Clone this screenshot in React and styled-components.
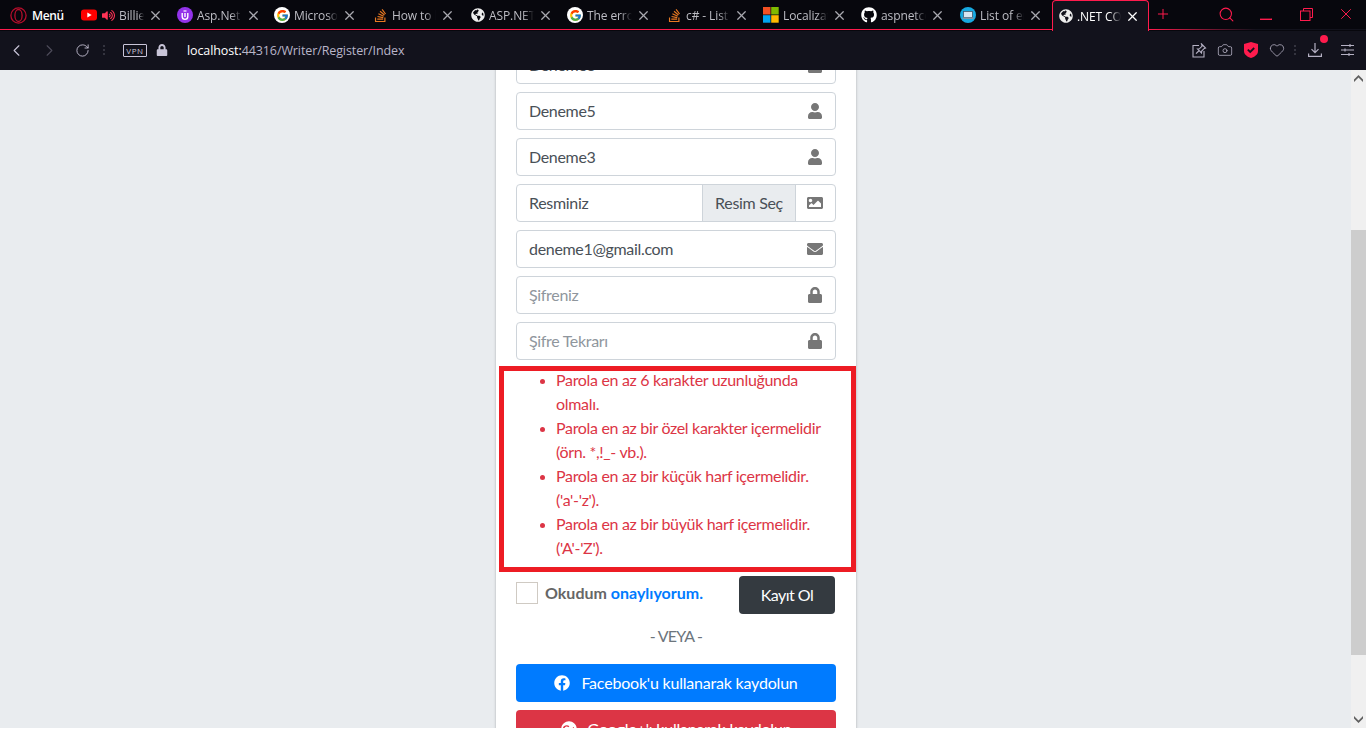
import React from 'react';
import styled, { createGlobalStyle } from 'styled-components';
import { FaUser, FaImage, FaEnvelope, FaLock, FaFacebook, FaGooglePlus, FaGlobeAmericas, FaGithub, FaStackOverflow, FaVolumeUp } from 'react-icons/fa';
import { FcGoogle } from 'react-icons/fc';
import { ChevronLeft, ChevronRight, RotateCw, Camera, Heart, X, Plus, Search } from 'lucide-react';

const GlobalStyle = createGlobalStyle`
  html, body {
    margin: 0;
    height: 733px;
    overflow: hidden;
    background: #fff;
  }
  * { box-sizing: border-box; }
`;

const Window = styled.div`
  width: 1366px;
  height: 733px;
  display: flex;
  flex-direction: column;
`;

/* browser chrome */
const TabStrip = styled.div`
  height: 31px;
  flex: none;
  display: flex;
  align-items: stretch;
  background: #07070d;
  border-bottom: 1px solid transparent;
  background-image: linear-gradient(90deg, #ff1b4d 0, #ff1b4d 1150px, #12121c 1256px);
  background-size: 100% 1px;
  background-position: bottom;
  background-repeat: no-repeat;
  font-family: 'Open Sans', 'Noto Sans', sans-serif;
  font-size: 12px;
  color: #bdbdc4;
`;

const MenuButton = styled.div`
  width: 73px;
  flex: none;
  display: flex;
  align-items: center;
  gap: 5px;
  padding-left: 10px;
  color: #fff;
  font-weight: 600;
  letter-spacing: -0.4px;
`;

const Tab = styled.div`
  width: ${({ $active }) => ($active ? '97px' : '98px')};
  margin-left: ${({ $active }) => ($active ? '-1px' : '0')};
  flex: none;
  height: ${({ $active }) => ($active ? '31px' : '30px')};
  display: flex;
  align-items: center;
  gap: 4px;
  padding: 0 ${({ $right }) => $right || 10}px 0 ${({ $pad }) => $pad || 6}px;
  ${({ $active }) =>
    $active &&
    `
    background: #12121c;
    border: 1px solid #ff1b4d;
    border-bottom: 0;
    border-radius: 4px 4px 0 0;
    color: #fff;
  `}
`;

const TabIcons = styled.span`
  display: flex;
  align-items: center;
  gap: 5px;
  flex: none;
`;

const TabTitle = styled.span`
  flex: 1;
  min-width: 0;
  overflow: hidden;
  white-space: nowrap;
  letter-spacing: -0.1px;
  mask-image: linear-gradient(90deg, #000 75%, transparent 100%);
`;

const TabClose = styled(X)`
  width: 15px;
  height: 15px;
  flex: none;
  color: ${({ $active }) => ($active ? '#fff' : '#a9a9b0')};
`;

const WindowButtons = styled.div`
  flex: 1;
  display: flex;
  align-items: center;
  color: #ff1b4d;
  padding: 0 0 2px 1px;
  height: 30px;
`;

const WindowButton = styled.span`
  width: ${({ $w }) => $w || 40}px;
  margin-left: ${({ $ml }) => $ml || 0}px;
  display: flex;
  justify-content: center;
  align-items: center;
`;

const Toolbar = styled.div`
  height: 39px;
  flex: none;
  display: flex;
  align-items: center;
  background: #12121c;
  color: #c9c5d8;
  font-family: 'Open Sans', 'Noto Sans', sans-serif;
  padding: 0 0 1px 7px;
`;

const NavButton = styled.span`
  width: 33px;
  display: flex;
  justify-content: center;
  margin-left: ${({ $ml }) => $ml || 0}px;
  margin-right: ${({ $mr }) => $mr || 0}px;
  color: ${({ $dim }) => ($dim ? '#4e4c5a' : '#c9c5d8')};
`;

const Vpn = styled.span`
  width: 24px;
  height: 13px;
  border: 1px solid #c9c5d8;
  border-radius: 1px;
  font-size: 8px;
  line-height: 11px;
  text-align: center;
  letter-spacing: 0.6px;
  margin-left: 18px;
`;

const Address = styled.div`
  margin-left: 15px;
  font-size: 12.5px;
  letter-spacing: -0.1px;
  color: #b9b5c9;
  b {
    color: #fff;
    font-weight: 400;
  }
`;

const ToolbarRight = styled.div`
  margin-left: auto;
  display: flex;
  align-items: center;
  color: #b5b1c4;
  padding-right: 6px;
`;

const ToolIcon = styled.span`
  position: relative;
  width: 26px;
  display: flex;
  justify-content: center;
  margin-left: ${({ $ml }) => $ml || 0}px;
`;

const Badge = styled.i`
  position: absolute;
  top: -8px;
  right: 0px;
  width: 8px;
  height: 8px;
  border-radius: 50%;
  background: #ff1b4d;
`;

/* page */
const Viewport = styled.div`
  height: 658px;
  flex: none;
  display: flex;
`;

const PageArea = styled.div`
  flex: 1;
  min-width: 0;
  overflow: hidden;
  background: #e9ecef;
  padding-left: 1px;
  font-family: 'Lato', 'Noto Sans', sans-serif;
  font-size: 16px;
  letter-spacing: -0.32px;
  color: #495057;
`;

const Card = styled.div`
  width: 360px;
  margin: -24px auto 0;
  padding: 0 20px 20px;
  background: #fff;
  box-shadow: 0 0 1px rgba(0, 0, 0, 0.125), 0 1px 3px rgba(0, 0, 0, 0.2);
`;

const Field = styled.div`
  height: 38px;
  margin-bottom: 8px;
  display: flex;
  align-items: stretch;
  border: 1px solid #ced4da;
  border-radius: 4px;
  overflow: hidden;
`;

const FieldText = styled.div`
  flex: 1;
  padding-left: 12px;
  line-height: 36px;
  color: ${({ $placeholder }) => ($placeholder ? '#8f969d' : '#495057')};
`;

const FileLabel = styled.div`
  width: 94px;
  margin-right: -1px;
  flex: none;
  background: #e9ecef;
  border-left: 1px solid #ced4da;
  border-right: 1px solid #ced4da;
  line-height: 36px;
  text-align: center;
`;

const FieldIcon = styled.div`
  width: 40px;
  flex: none;
  display: flex;
  align-items: center;
  justify-content: center;
  color: #777;
  font-size: 16px;
`;

const Errors = styled.div`
  position: relative;
  margin-bottom: 16px;
`;

const ErrorList = styled.ul`
  margin: 0;
  padding: 0 0 0 40px;
  color: #dc3545;
  line-height: 24px;
  li::marker { font-size: 14px; }
`;

const ErrorTail = styled.span`
  white-space: nowrap;
`;

const Highlight = styled.div`
  position: absolute;
  top: -2px;
  left: -17px;
  right: -20px;
  bottom: -12px;
  border: 5px solid #ed1c24;
  pointer-events: none;
`;

const AgreeRow = styled.div`
  display: flex;
  justify-content: space-between;
  align-items: flex-start;
  padding-right: 1px;
`;

const Agree = styled.label`
  display: flex;
  align-items: center;
  gap: 7px;
  margin-top: 6px;
  font-weight: 700;
  letter-spacing: 0;
  color: #666;
`;

const AgreeText = styled.span`
  margin-top: -2px;
`;

const CheckBox = styled.span`
  width: 22px;
  height: 22px;
  border: 1px solid #cfcac3;
`;

const Link = styled.span`
  color: #007bff;
`;

const Submit = styled.div`
  width: 96px;
  height: 38px;
  background: #343a40;
  border-radius: 4px;
  color: #fff;
  line-height: 38px;
  letter-spacing: -0.55px;
  text-align: center;
`;

const Or = styled.p`
  margin: 10px 0 16px;
  height: 24px;
  line-height: 24px;
  letter-spacing: -0.8px;
  text-align: center;
  color: #6c757d;
`;

const Social = styled.div`
  height: 38px;
  margin-bottom: 8px;
  padding-bottom: 1px;
  display: flex;
  align-items: center;
  justify-content: center;
  gap: 11px;
  border-radius: 4px;
  letter-spacing: -0.2px;
  color: #fff;
  background: ${({ $color }) => $color};
`;

const Bottom = styled.div`
  height: 5px;
  flex: none;
  background: #fff;
`;

const Scrollbar = styled.div`
  width: 15px;
  flex: none;
  display: flex;
  flex-direction: column;
  background: #f0f0f0;
  color: #606060;
`;

const ScrollArrow = styled.span`
  height: 17px;
  flex: none;
  display: flex;
  align-items: center;
  justify-content: center;
  margin-top: ${({ $down }) => ($down ? 'auto' : 0)};
`;

const ScrollThumb = styled.div`
  height: 425px;
  margin-top: 143px;
  background: #cdcdcd;
`;

/* icons */
const OperaLogo = () => (
  <svg width="17" height="17" viewBox="0 0 17 17" fill="none" stroke="#b50e2c" strokeWidth="1.3">
    <circle cx="8.5" cy="8.5" r="7.6" />
    <ellipse cx="8.5" cy="8.5" rx="3.6" ry="6" />
  </svg>
);

const YouTube = () => (
  <svg width="16" height="12" viewBox="0 0 16 12">
    <rect width="16" height="11" y="0.5" rx="3" fill="#f00" />
    <path d="M6.3 3.5v5l4.4-2.5z" fill="#fff" />
  </svg>
);

const Ulti = () => (
  <svg width="16" height="16" viewBox="0 0 16 16">
    <circle cx="8" cy="8" r="8" fill="#9333ea" />
    <path d="M5.2 6v3.6a2.8 2.8 0 0 0 5.6 0V6M8 6v4" fill="none" stroke="#fff" strokeWidth="1.4" />
    <path d="M6.5 4h3" stroke="#fff" strokeWidth="1.2" />
  </svg>
);

const GoogleBadge = styled.span`
  width: 16px;
  height: 16px;
  border-radius: 50%;
  background: #fff;
  display: flex;
  align-items: center;
  justify-content: center;
`;

const Google = () => (
  <GoogleBadge>
    <FcGoogle size={13} />
  </GoogleBadge>
);

const Microsoft = () => (
  <svg width="16" height="16" viewBox="0 0 16 16">
    <rect width="7.5" height="7.5" fill="#f25022" />
    <rect x="8.2" width="7.5" height="7.5" fill="#7fba00" />
    <rect y="8.2" width="7.5" height="7.5" fill="#00a4ef" />
    <rect x="8.2" y="8.2" width="7.5" height="7.5" fill="#ffb900" />
  </svg>
);

const Laptop = () => (
  <svg width="16" height="16" viewBox="0 0 16 16">
    <circle cx="8" cy="8" r="8" fill="#17a9e0" />
    <rect x="3.5" y="4.5" width="9" height="6" fill="#d7e6f2" stroke="#44576b" strokeWidth="0.8" />
    <rect x="2.5" y="10.5" width="11" height="1.5" fill="#8296a8" />
  </svg>
);

const PinBox = () => (
  <svg width="15" height="15" viewBox="0 0 15 15" fill="none" stroke="currentColor" strokeWidth="1.1">
    <path d="M7 2.5H1v11.5h11V8" />
    <path d="M9.5 1l4 4-1.2.4-2.6 2.7-.2 1.9-4-4 1.9-.2 2.7-2.6zM6.7 8l-2.7 2.7" />
  </svg>
);

const Shield = () => (
  <svg width="14" height="16" viewBox="0 0 14 16">
    <path d="M7 0l7 2v7c0 3.5-3.2 5.8-7 7-3.8-1.2-7-3.5-7-7V2z" fill="#ff1b4d" />
    <path d="M3.8 7.6l2.4 2.3 4-3.9" fill="none" stroke="#12121c" strokeWidth="1.8" />
  </svg>
);

const Download = () => (
  <svg width="14" height="14" viewBox="0 0 14 14" fill="none" stroke="currentColor" strokeWidth="1.2">
    <path d="M7 0v9.5M3.5 6.2L7 9.7l3.5-3.5M.6 10.5v2.9h12.8v-2.9" />
  </svg>
);

const Sliders = () => (
  <svg width="13" height="12" viewBox="0 0 13 12" fill="none" stroke="currentColor" strokeWidth="1.1">
    <path d="M0 1.5h13M0 6h13M0 10.5h13M9 0v3M4 4.5v3M8 9v3" />
  </svg>
);

const Dots = styled.span`
  width: 2px;
  height: 10px;
  margin-left: ${({ $ml }) => $ml || 0}px;
  background: repeating-linear-gradient(#34343f 0 2px, transparent 2px 4px);
`;

const tabs = [
  { icons: [<YouTube key="y" />, <FaVolumeUp key="v" size={13} color="#ff3355" />], title: 'Billie Eilish', pad: 8, right: 8 },
  { icons: [<Ulti key="u" />], title: 'Asp.Net Core', pad: 6, right: 8 },
  { icons: [<Google key="g" />], title: 'Microsoft', pad: 5 },
  { icons: [<FaStackOverflow key="s" size={15} color="#e87922" />], title: 'How to list', pad: 6 },
  { icons: [<FaGlobeAmericas key="w" size={14} color="#eee" />], title: 'ASP.NET Core', pad: 6 },
  { icons: [<Google key="g" />], title: 'The error is', pad: 4 },
  { icons: [<FaStackOverflow key="s" size={15} color="#e87922" />], title: 'c# - List of', pad: 6 },
  { icons: [<Microsoft key="m" />], title: 'Localization', pad: 4 },
  { icons: [<FaGithub key="h" size={16} color="#fff" />], title: 'aspnetcore', pad: 4 },
  { icons: [<Laptop key="l" />], title: 'List of errors', pad: 5 },
];

const errors = [
  ['Parola en az 6 karakter uzunluğunda', 'olmalı.'],
  ['Parola en az bir özel karakter içermelidir', '(örn. *,!_- vb.).'],
  ['Parola en az bir küçük harf içermelidir.', "('a'-'z')."],
  ['Parola en az bir büyük harf içermelidir.', "('A'-'Z')."],
];

const App = () => {
  return (
    <Window>
      <GlobalStyle />
      <TabStrip>
        <MenuButton>
          <OperaLogo />
          Menü
        </MenuButton>
        {tabs.map((tab) => (
          <Tab key={tab.title} $pad={tab.pad} $right={tab.right}>
            <TabIcons>{tab.icons}</TabIcons>
            <TabTitle>{tab.title}</TabTitle>
            <TabClose />
          </Tab>
        ))}
        <Tab $active $pad={6} $right={8}>
          <TabIcons>
            <FaGlobeAmericas size={14} color="#eee" />
          </TabIcons>
          <TabTitle>.NET CORE</TabTitle>
          <TabClose $active />
        </Tab>
        <WindowButtons>
          <WindowButton $w={26}>
            <Plus size={16} strokeWidth={1.5} />
          </WindowButton>
          <WindowButton $ml={30}>
            <Search size={17} strokeWidth={1.5} />
          </WindowButton>
          <WindowButton>
            <svg width="12" height="12" viewBox="0 0 12 12" stroke="currentColor" strokeWidth="1.4">
              <path d="M0 11.3h12" />
            </svg>
          </WindowButton>
          <WindowButton>
            <svg width="13" height="13" viewBox="0 0 13 13" fill="none" stroke="currentColor">
              <rect x="0.5" y="3" width="9.5" height="9.5" />
              <path d="M3.5 3V.5h9v9H10" />
            </svg>
          </WindowButton>
          <WindowButton>
            <X size={18} strokeWidth={1.3} />
          </WindowButton>
        </WindowButtons>
      </TabStrip>
      <Toolbar>
        <NavButton $ml={-7}>
          <ChevronLeft size={19} strokeWidth={1.4} />
        </NavButton>
        <NavButton $dim>
          <ChevronRight size={19} strokeWidth={1.4} />
        </NavButton>
        <NavButton>
          <RotateCw size={15} strokeWidth={1.4} />
        </NavButton>
        <Dots $ml={4} />
        <Vpn>VPN</Vpn>
        <NavButton $ml={-2} $mr={-6}>
          <FaLock size={12} />
        </NavButton>
        <Address>
          <b>localhost:</b>44316/Writer/Register/Index
        </Address>
        <ToolbarRight>
          <ToolIcon>
            <PinBox />
          </ToolIcon>
          <ToolIcon>
            <Camera size={16} strokeWidth={1.2} />
          </ToolIcon>
          <ToolIcon>
            <Shield />
          </ToolIcon>
          <ToolIcon>
            <Heart size={16} strokeWidth={1.2} />
          </ToolIcon>
          <Dots $ml={4} />
          <ToolIcon $ml={6}>
            <Download />
            <Badge />
          </ToolIcon>
          <ToolIcon $ml={6}>
            <Sliders />
          </ToolIcon>
        </ToolbarRight>
      </Toolbar>
      <Viewport>
        <PageArea>
          <Card>
            <Field>
              <FieldText>Deneme3</FieldText>
              <FieldIcon>
                <FaUser />
              </FieldIcon>
            </Field>
            <Field>
              <FieldText>Deneme5</FieldText>
              <FieldIcon>
                <FaUser />
              </FieldIcon>
            </Field>
            <Field>
              <FieldText>Deneme3</FieldText>
              <FieldIcon>
                <FaUser />
              </FieldIcon>
            </Field>
            <Field>
              <FieldText>Resminiz</FieldText>
              <FileLabel>Resim Seç</FileLabel>
              <FieldIcon>
                <FaImage />
              </FieldIcon>
            </Field>
            <Field>
              <FieldText>deneme1@gmail.com</FieldText>
              <FieldIcon>
                <FaEnvelope />
              </FieldIcon>
            </Field>
            <Field>
              <FieldText $placeholder>Şifreniz</FieldText>
              <FieldIcon>
                <FaLock />
              </FieldIcon>
            </Field>
            <Field>
              <FieldText $placeholder>Şifre Tekrarı</FieldText>
              <FieldIcon>
                <FaLock />
              </FieldIcon>
            </Field>
            <Errors>
              <ErrorList>
                {errors.map(([head, tail]) => (
                  <li key={head}>
                    {head} <ErrorTail>{tail}</ErrorTail>
                  </li>
                ))}
              </ErrorList>
              <Highlight />
            </Errors>
            <AgreeRow>
              <Agree>
                <CheckBox />
                <AgreeText>
                  Okudum <Link>onaylıyorum.</Link>
                </AgreeText>
              </Agree>
              <Submit>Kayıt Ol</Submit>
            </AgreeRow>
            <Or>- VEYA -</Or>
            <Social $color="#007bff">
              <FaFacebook />
              Facebook'u kullanarak kaydolun
            </Social>
            <Social $color="#dc3545">
              <FaGooglePlus />
              Google+'ı kullanarak kaydolun
            </Social>
          </Card>
        </PageArea>
        <Scrollbar>
          <ScrollArrow>
            <svg width="9" height="7" viewBox="0 0 9 7" fill="currentColor">
              <path d="M4.5 0L9 4.5V7L4.5 2.5 0 7V4.5z" />
            </svg>
          </ScrollArrow>
          <ScrollThumb />
          <ScrollArrow $down>
            <svg width="9" height="7" viewBox="0 0 9 7" fill="currentColor">
              <path d="M4.5 7L9 2.5V0L4.5 4.5 0 0v2.5z" />
            </svg>
          </ScrollArrow>
        </Scrollbar>
      </Viewport>
      <Bottom />
    </Window>
  );
};

export default App;
